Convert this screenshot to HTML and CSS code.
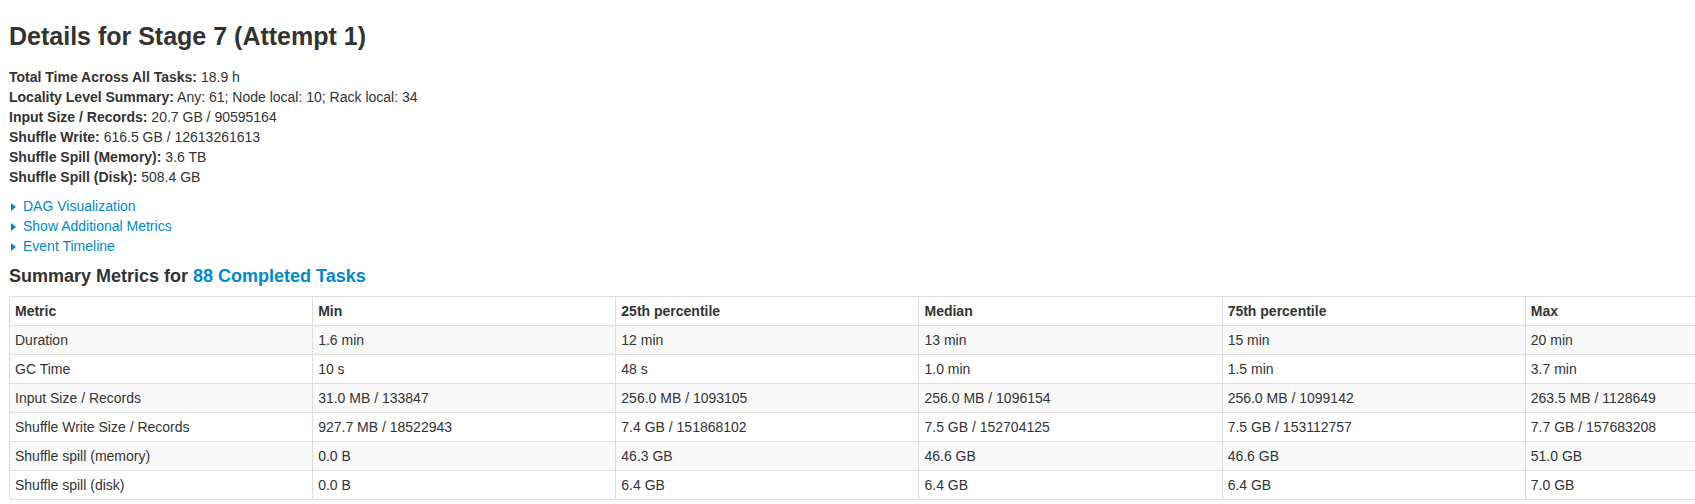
FILE: index.html
```html
<!DOCTYPE html>
<html>
<head>
<meta charset="utf-8">
<title>Details for Stage 7 (Attempt 1)</title>
<link rel="stylesheet" href="styles.css">
</head>
<body>
<div class="page">
  <h3 class="title">Details for Stage 7 (Attempt 1)</h3>
  <ul class="summary">
    <li><strong>Total Time Across All Tasks:</strong> 18.9 h</li>
    <li><strong>Locality Level Summary:</strong> Any: 61; Node local: 10; Rack local: 34</li>
    <li><strong>Input Size / Records:</strong> 20.7 GB / 90595164</li>
    <li><strong>Shuffle Write:</strong> 616.5 GB / 12613261613</li>
    <li><strong>Shuffle Spill (Memory):</strong> 3.6 TB</li>
    <li><strong>Shuffle Spill (Disk):</strong> 508.4 GB</li>
  </ul>
  <div class="toggles">
    <div class="toggle"><span class="arrow-closed"></span><a href="#">DAG Visualization</a></div>
    <div class="toggle"><span class="arrow-closed"></span><a href="#">Show Additional Metrics</a></div>
    <div class="toggle"><span class="arrow-closed"></span><a href="#">Event Timeline</a></div>
  </div>
  <h4 class="section">Summary Metrics for <a href="#">88 Completed Tasks</a></h4>
  <table class="metrics">
    <thead>
      <tr><th>Metric</th><th>Min</th><th>25th percentile</th><th>Median</th><th>75th percentile</th><th>Max</th></tr>
    </thead>
    <tbody>
      <tr><td>Duration</td><td>1.6 min</td><td>12 min</td><td>13 min</td><td>15 min</td><td>20 min</td></tr>
      <tr><td>GC Time</td><td>10 s</td><td>48 s</td><td>1.0 min</td><td>1.5 min</td><td>3.7 min</td></tr>
      <tr><td>Input Size / Records</td><td>31.0 MB / 133847</td><td>256.0 MB / 1093105</td><td>256.0 MB / 1096154</td><td>256.0 MB / 1099142</td><td>263.5 MB / 1128649</td></tr>
      <tr><td>Shuffle Write Size / Records</td><td>927.7 MB / 18522943</td><td>7.4 GB / 151868102</td><td>7.5 GB / 152704125</td><td>7.5 GB / 153112757</td><td>7.7 GB / 157683208</td></tr>
      <tr><td>Shuffle spill (memory)</td><td>0.0 B</td><td>46.3 GB</td><td>46.6 GB</td><td>46.6 GB</td><td>51.0 GB</td></tr>
      <tr><td>Shuffle spill (disk)</td><td>0.0 B</td><td>6.4 GB</td><td>6.4 GB</td><td>6.4 GB</td><td>7.0 GB</td></tr>
    </tbody>
  </table>
</div>
</body>
</html>
```
FILE: styles.css
```css
html, body {
  margin: 0;
  padding: 0;
  overflow: hidden;
  background: #fff;
}
body {
  font-family: "Liberation Sans", Arial, Helvetica, sans-serif;
  font-size: 14px;
  line-height: 20px;
  color: #333;
}
a {
  color: #0088cc;
  text-decoration: none;
}
.page {
  padding: 16px 0 0 9px;
}
.title {
  margin: 0;
  font-size: 25px;
  line-height: 40px;
  font-weight: bold;
  color: #333;
}
.summary {
  list-style: none;
  margin: 11px 0 0;
  padding: 0;
}
.summary strong {
  font-weight: bold;
}
.toggles {
  margin-top: 9px;
}
.toggle {
  display: flex;
  align-items: center;
  height: 20px;
}
.arrow-closed {
  width: 0;
  height: 0;
  border-top: 4px solid transparent;
  border-bottom: 4px solid transparent;
  border-left: 5px solid #0088cc;
  margin: 1px 7px 0 2px;
}
.section {
  margin: 10px 0 10px;
  font-size: 18px;
  line-height: 20px;
  font-weight: bold;
  color: #333;
}
.metrics {
  width: 1820px;
  table-layout: fixed;
  border-collapse: separate;
  border-spacing: 0;
  border: 1px solid #ddd;
  border-left: 0;
  border-radius: 4px;
}
.metrics th,
.metrics td {
  padding: 4px 5px;
  line-height: 20px;
  text-align: left;
  vertical-align: top;
  border-top: 1px solid #ddd;
  border-left: 1px solid #ddd;
}
.metrics th {
  font-weight: bold;
}
.metrics thead tr:first-child th {
  border-top: 0;
}
.metrics thead tr:first-child th:first-child {
  border-top-left-radius: 4px;
}
.metrics tbody tr:last-child td:first-child {
  border-bottom-left-radius: 4px;
}
.metrics tbody tr:nth-child(odd) td {
  background: #f9f9f9;
}
```
